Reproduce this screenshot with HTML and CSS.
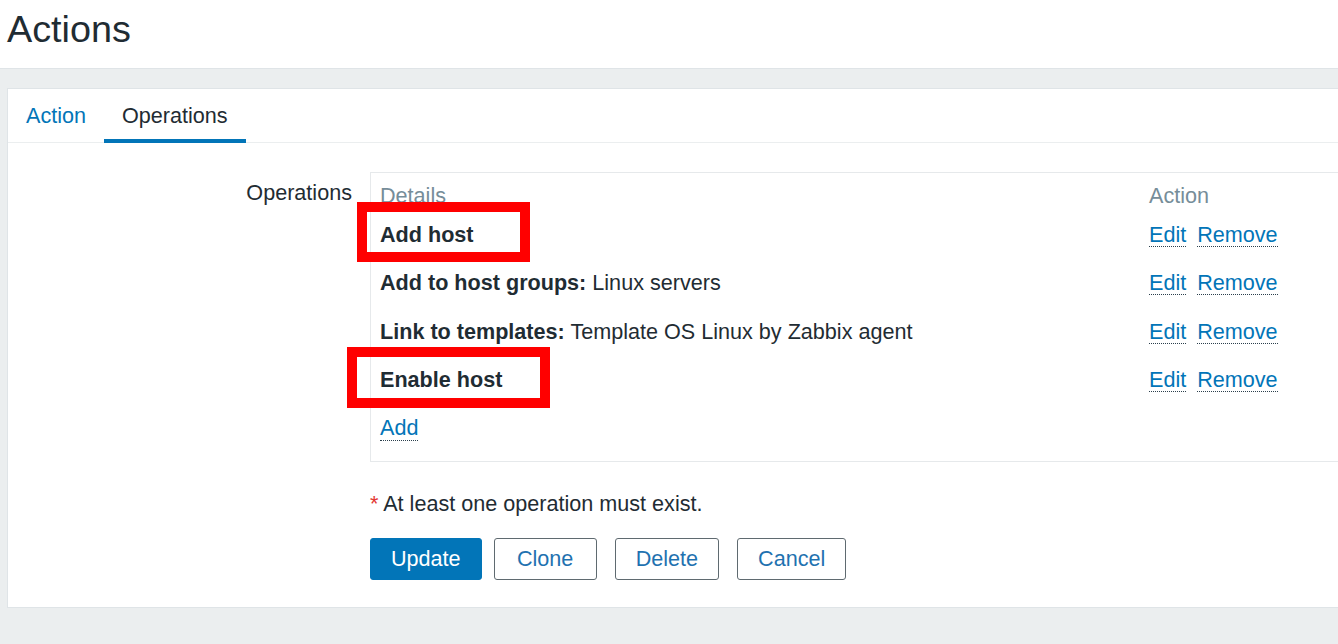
FILE: index.html
```html
<!DOCTYPE html>
<html>
<head>
<meta charset="utf-8">
<link rel="stylesheet" href="styles.css">
</head>
<body>
<header class="page-header">
  <h1 class="page-title">Actions</h1>
</header>
<main class="page-body">
  <section class="panel">
    <ul class="tabs">
      <li class="tab"><a class="tab-link">Action</a></li>
      <li class="tab tab-active"><a class="tab-link">Operations</a></li>
    </ul>
    <div class="form">
      <div class="form-label">Operations</div>
      <div class="form-field">
        <div class="ops-box">
          <table class="ops-table">
            <thead>
              <tr><th class="col-details">Details</th><th class="col-action">Action</th></tr>
            </thead>
            <tbody>
              <tr>
                <td><b>Add host</b></td>
                <td><span class="links"><a class="link">Edit</a><a class="link">Remove</a></span></td>
              </tr>
              <tr>
                <td><b>Add to host groups:</b> Linux servers</td>
                <td><span class="links"><a class="link">Edit</a><a class="link">Remove</a></span></td>
              </tr>
              <tr>
                <td><b>Link to templates:</b> Template OS Linux by Zabbix agent</td>
                <td><span class="links"><a class="link">Edit</a><a class="link">Remove</a></span></td>
              </tr>
              <tr>
                <td><b>Enable host</b></td>
                <td><span class="links"><a class="link">Edit</a><a class="link">Remove</a></span></td>
              </tr>
              <tr>
                <td><a class="link">Add</a></td>
                <td></td>
              </tr>
            </tbody>
          </table>
        </div>
        <p class="note"><span class="req">*</span> At least one operation must exist.</p>
        <div class="buttons">
          <button class="btn btn-primary">Update</button>
          <button class="btn btn-alt btn-clone">Clone</button>
          <button class="btn btn-alt">Delete</button>
          <button class="btn btn-alt">Cancel</button>
        </div>
      </div>
    </div>
  </section>
</main>
<div class="mark mark-add"></div>
<div class="mark mark-enable"></div>
</body>
</html>
```
FILE: styles.css
```css
html, body {
  margin: 0;
  padding: 0;
}
body {
  background: #ebeeef;
  font-family: "Liberation Sans", Arial, sans-serif;
  font-size: 21.6px;
  color: #1f2c33;
  overflow: hidden;
  height: 644px;
  position: relative;
}
.page-header {
  background: #fff;
  height: 68px;
  border-bottom: 1px solid #dfe4e7;
  box-sizing: content-box;
  padding-left: 7px;
}
.page-title {
  margin: 0;
  padding-top: 8px;
  font-size: 37.8px;
  line-height: 42px;
  font-weight: normal;
  color: #1f2c33;
}
.page-body {
  padding: 19px 0 0 7px;
}
.panel {
  background: #fff;
  border: 1px solid #dfe4e7;
  width: 1400px;
  padding-bottom: 27px;
}
.tabs {
  list-style: none;
  margin: 0;
  padding: 0;
  display: flex;
  border-bottom: 1px solid #ebeeef;
}
.tab {
  margin-bottom: -1px;
}
.tab-link {
  display: block;
  padding: 15px 18px 11px;
  line-height: 24px;
  border-bottom: 4px solid transparent;
  color: #0275b8;
}
.tab-active .tab-link {
  color: #1f2c33;
  border-bottom-color: #0275b8;
}
.form {
  display: grid;
  grid-template-columns: 344px 1fr;
  column-gap: 18px;
  padding-top: 29px;
}
.form-label {
  text-align: right;
  line-height: 24px;
  padding-top: 9px;
}
.ops-box {
  border: 1px solid #e6e9eb;
  padding: 0 0 9px 9px;
}
.ops-table {
  border-collapse: collapse;
}
.ops-table th {
  font-weight: normal;
  color: #768d99;
  text-align: left;
  line-height: 24px;
  padding: 11px 0 3px;
}
.col-details {
  width: 769px;
}
.ops-table td {
  line-height: 24.3px;
  padding: 12px 0;
  white-space: nowrap;
}
.links {
  display: inline-flex;
  gap: 11px;
}
.link {
  color: #0275b8;
  border-bottom: 1px dotted #2b3f4c;
  line-height: 23px;
}
.note {
  margin: 30px 0 0;
  line-height: 24px;
}
.req {
  color: #e33734;
}
.buttons {
  display: flex;
  margin-top: 22px;
}
.btn {
  height: 42px;
  padding: 0 20px;
  font-family: "Liberation Sans", Arial, sans-serif;
  font-size: 21.6px;
  border-radius: 3px;
  margin-right: 18px;
  cursor: pointer;
}
.btn-primary {
  background: #0275b8;
  border: 1px solid #0275b8;
  color: #fff;
  margin-right: 12px;
}
.btn-alt {
  background: #fff;
  border: 1px solid #5f6a70;
  color: #1f72b0;
}
.btn-clone {
  min-width: 103px;
}
.mark {
  position: absolute;
  border: 10px solid #ff0000;
  box-sizing: border-box;
}
.mark-add {
  left: 357px;
  top: 202px;
  width: 173px;
  height: 60px;
}
.mark-enable {
  left: 347px;
  top: 347px;
  width: 203px;
  height: 61px;
}
```
